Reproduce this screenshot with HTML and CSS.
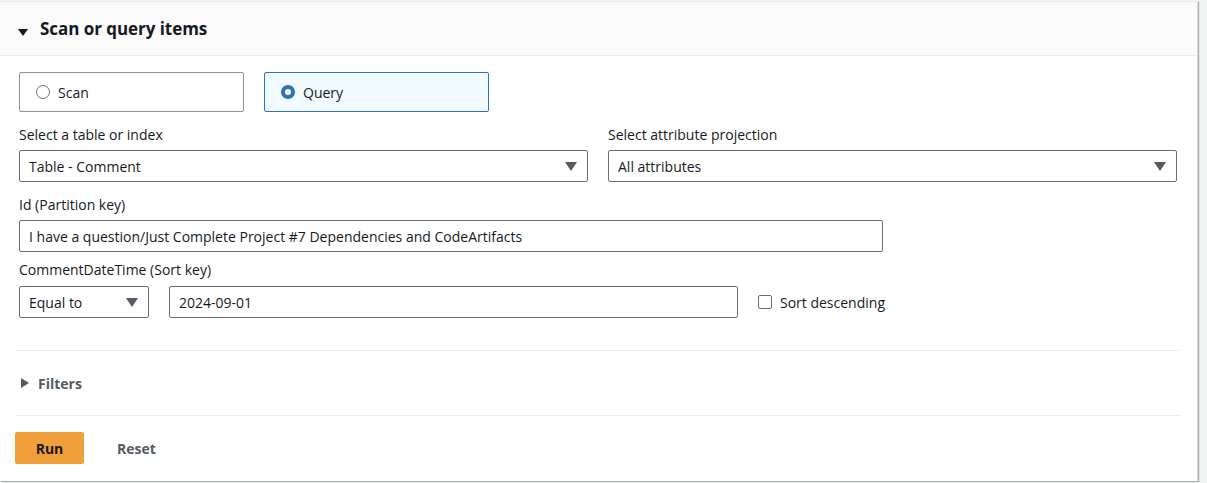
FILE: index.html
```html
<!DOCTYPE html>
<html>
<head>
<meta charset="utf-8">
<link rel="stylesheet" href="styles.css">
</head>
<body>
<div class="page">
  <div class="card">
    <div class="card-header">
      <span class="caret-down"></span>
      <h2 class="title">Scan or query items</h2>
    </div>
    <div class="card-body">
      <div class="tiles">
        <label class="tile">
          <span class="radio"></span>
          <span class="tile-label">Scan</span>
        </label>
        <label class="tile tile-selected">
          <span class="radio radio-on"></span>
          <span class="tile-label">Query</span>
        </label>
      </div>

      <div class="row-two">
        <div class="field">
          <div class="label">Select a table or index</div>
          <div class="select"><span>Table - Comment</span><span class="arrow"></span></div>
        </div>
        <div class="field">
          <div class="label">Select attribute projection</div>
          <div class="select"><span>All attributes</span><span class="arrow"></span></div>
        </div>
      </div>

      <div class="field field-pk">
        <div class="label">Id (Partition key)</div>
        <div class="input input-pk">I have a question/Just Complete Project #7 Dependencies and CodeArtifacts</div>
      </div>

      <div class="field field-sk">
        <div class="label label-sk">CommentDateTime (Sort key)</div>
        <div class="sort-row">
          <div class="select select-op"><span>Equal to</span><span class="arrow"></span></div>
          <div class="input input-sk">2024-09-01</div>
          <label class="check"><span class="box"></span><span>Sort descending</span></label>
        </div>
      </div>
    </div>

    <div class="divider divider-top"></div>
    <div class="filters">
      <span class="caret-right"></span>
      <span class="filters-label">Filters</span>
    </div>
    <div class="divider"></div>

    <div class="actions">
      <button class="btn-run">Run</button>
      <button class="btn-reset">Reset</button>
    </div>
  </div>
</div>
</body>
</html>
```

FILE: styles.css
```css
* { box-sizing: border-box; }
html, body {
  margin: 0;
  padding: 0;
  background: #f2f3f3;
  font-family: "Open Sans", "Noto Sans", sans-serif;
  color: #16191f;
  font-size: 14px;
}
.page {
  width: 1207px;
  height: 483px;
  overflow: hidden;
}
.card {
  width: 1198px;
  margin-top: 1px;
  background: #fff;
  border-top: 1px solid #eaeded;
  border-right: 1px solid #d5dbdb;
  box-shadow: 1px 1px 1px rgba(0,28,36,0.3);
  height: 480px;
}
.card-header {
  height: 54px;
  background: #fafafa;
  border-bottom: 1px solid #eaeded;
  display: flex;
  align-items: center;
  padding-left: 18px;
}
.caret-down {
  width: 0;
  height: 0;
  border-left: 5px solid transparent;
  border-right: 5px solid transparent;
  border-top: 7px solid #16191f;
  margin-top: 7px;
  margin-right: 12px;
}
.title {
  margin: 0;
  font-size: 17px;
  font-weight: 700;
  letter-spacing: -0.05px;
}
.card-body {
  padding: 16px 20px 0 19px;
}
.tiles {
  display: flex;
  gap: 20px;
}
.tile {
  width: 225px;
  height: 40px;
  border: 1px solid #879596;
  border-radius: 2px;
  display: flex;
  align-items: center;
  padding-left: 16px;
}
.tile-selected {
  border-color: #2e73b8;
  background: #f1faff;
}
.radio {
  width: 14px;
  height: 14px;
  border: 1.5px solid #687078;
  border-radius: 50%;
  margin-right: 8px;
  background: #fff;
}
.radio-on {
  border: 4px solid #2e73b8;
}
.tile-label {
  font-size: 14px;
}
.row-two {
  display: flex;
  gap: 20px;
  margin-top: 13px;
}
.row-two .field { width: 569px; }
.label {
  font-size: 14px;
  line-height: 20px;
  margin-bottom: 5px;
}
.label-sk { margin-bottom: 6px; }
.select, .input {
  height: 32px;
  border: 1px solid #687078;
  border-radius: 2px;
  display: flex;
  align-items: center;
  justify-content: space-between;
  padding: 0 10px 0 9px;
  font-size: 14px;
  white-space: nowrap;
}
.arrow {
  width: 0;
  height: 0;
  border-left: 6px solid transparent;
  border-right: 6px solid transparent;
  border-top: 9px solid #545b64;
}
.field-pk { margin-top: 13px; }
.field-sk { margin-top: 8px; }
.input-pk { width: 864px; }
.sort-row {
  display: flex;
  align-items: center;
  gap: 20px;
}
.select-op { width: 130px; }
.input-sk { width: 569px; }
.check {
  display: flex;
  align-items: center;
  gap: 8px;
}
.box {
  width: 14px;
  height: 14px;
  border: 1px solid #687078;
  border-radius: 2px;
}
.divider {
  height: 1px;
  background: #eaeded;
  margin: 0 16px 0 15px;
}
.divider-top { margin-top: 32px; }
.filters {
  height: 64px;
  display: flex;
  align-items: center;
  padding-left: 21px;
}
.caret-right {
  width: 0;
  height: 0;
  border-top: 5px solid transparent;
  border-bottom: 5px solid transparent;
  border-left: 8px solid #545b64;
  margin-right: 9px;
}
.filters-label {
  font-weight: 700;
  color: #545b64;
  font-size: 14px;
}
.actions {
  display: flex;
  align-items: center;
  padding: 16px 0 0 15px;
}
.btn-run {
  width: 69px;
  height: 32px;
  background: #f0a03a;
  border: none;
  border-radius: 2px;
  font-family: inherit;
  font-weight: 700;
  font-size: 14px;
  color: #16191f;
}
.btn-reset {
  background: none;
  border: none;
  font-family: inherit;
  font-weight: 700;
  font-size: 14px;
  color: #545b64;
  margin-left: 27px;
}
```
